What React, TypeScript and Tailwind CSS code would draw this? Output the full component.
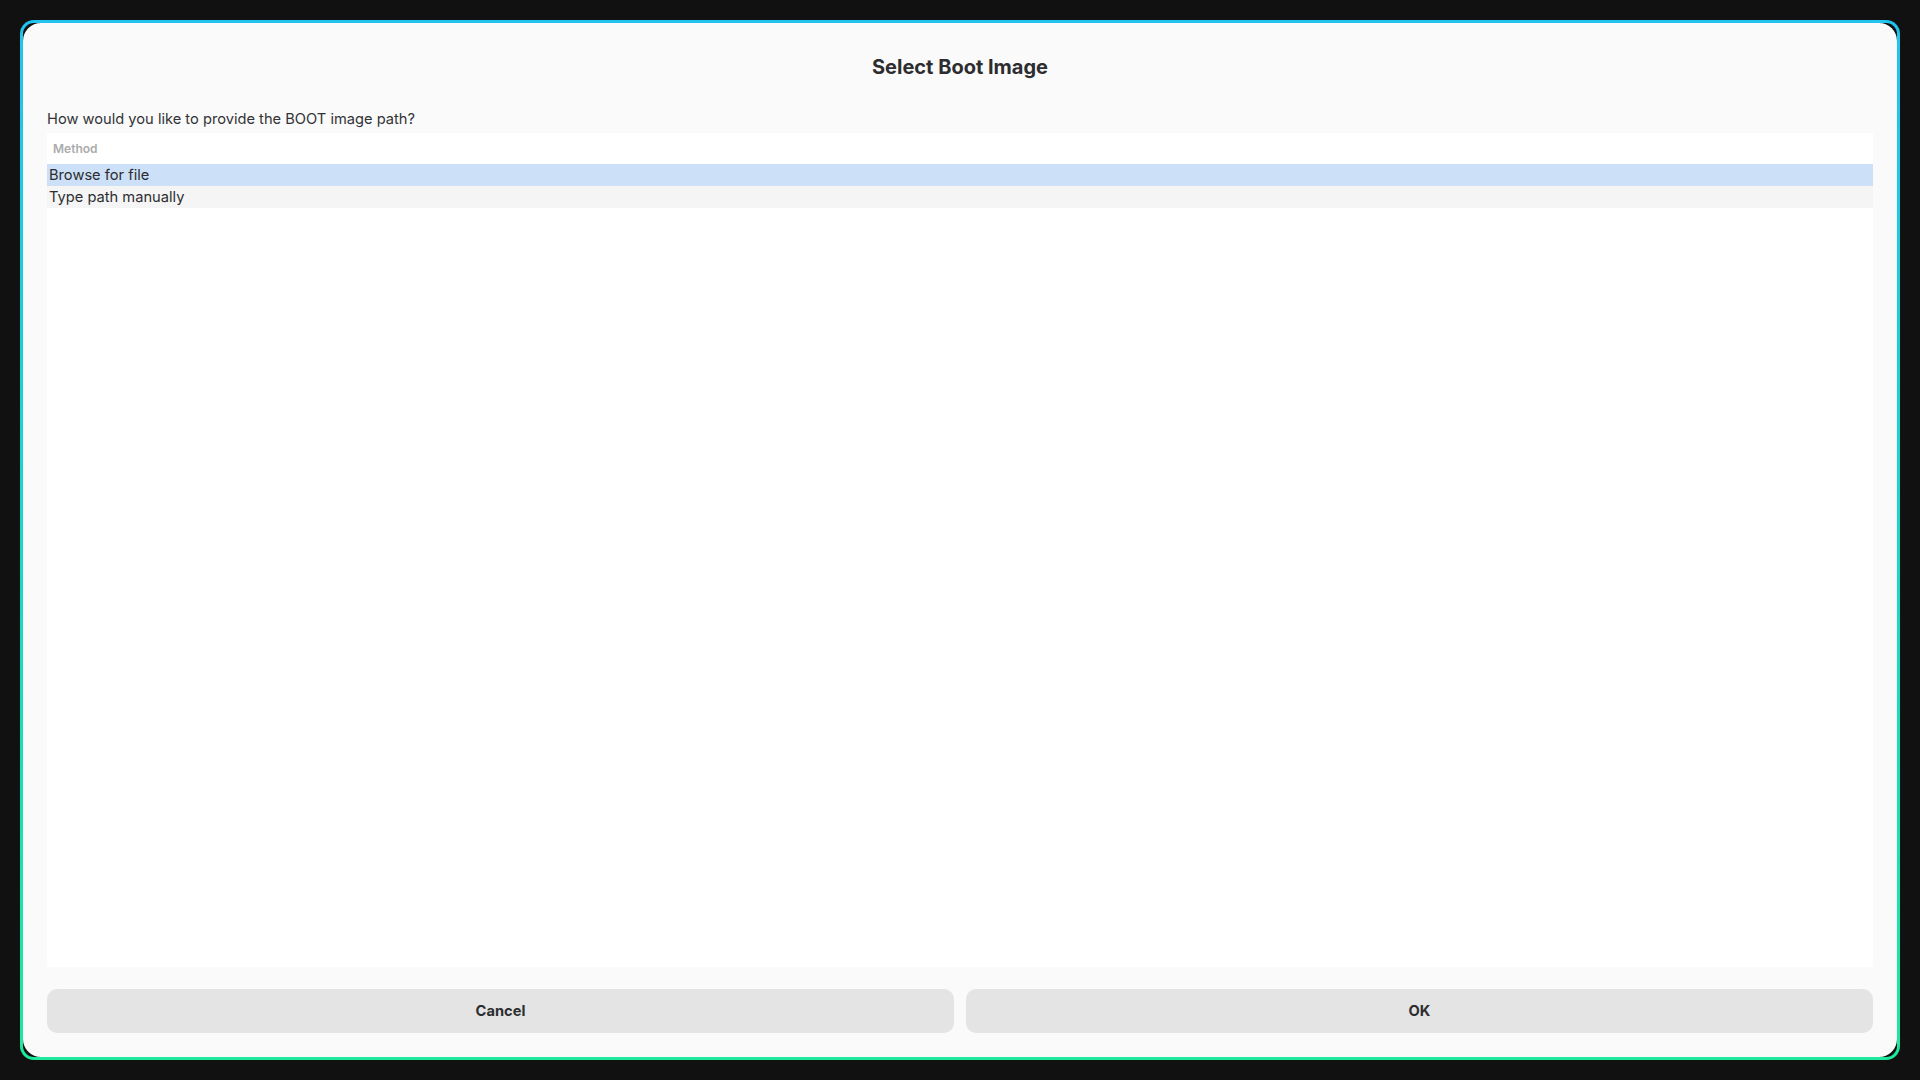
import { useState } from 'react'

const methods = ['Browse for file', 'Type path manually']

export default function App() {
  const [selected, setSelected] = useState(0)

  return (
    <div className="min-h-screen w-full bg-[#111111] p-5 font-['Inter',sans-serif]">
      <div className="h-[1040px] rounded-[14px] bg-gradient-to-b from-[#22c3ee] to-[#1de89c] p-[3px]">
        <div className="h-full rounded-[11px] bg-[#111111]">
          <div className="flex h-full flex-col rounded-[18px] bg-[#fafafa] p-6">
            <h1 className="mt-[6px] text-center text-[20px] font-bold leading-[28px] text-[#2d2d30]">
              Select Boot Image
            </h1>

            <p className="mt-[28px] text-[14.667px] leading-[20px] text-[#333336]">
              How would you like to provide the BOOT image path?
            </p>

            <div className="mt-[4px] flex-1 bg-white">
              <div className="flex h-[31px] items-center px-[6px] text-[12px] font-semibold text-[#ababab]">
                Method
              </div>
              {methods.map((m, i) => (
                <div
                  key={m}
                  onClick={() => setSelected(i)}
                  className={`flex h-[22px] items-center px-[2px] pb-px text-[14.667px] text-[#2d2d30] ${
                    i === selected ? 'bg-[#cce0f7]' : 'bg-[#f5f5f5]'
                  }`}
                >
                  {m}
                </div>
              ))}
            </div>

            <div className="mt-[22px] flex gap-3">
              <button className="h-[44px] flex-1 rounded-[10px] bg-[#e4e4e4] text-[14.667px] font-bold text-[#2d2d30]">
                Cancel
              </button>
              <button className="h-[44px] flex-1 rounded-[10px] bg-[#e4e4e4] text-[14.667px] font-bold text-[#2d2d30]">
                OK
              </button>
            </div>
          </div>
        </div>
      </div>
    </div>
  )
}
